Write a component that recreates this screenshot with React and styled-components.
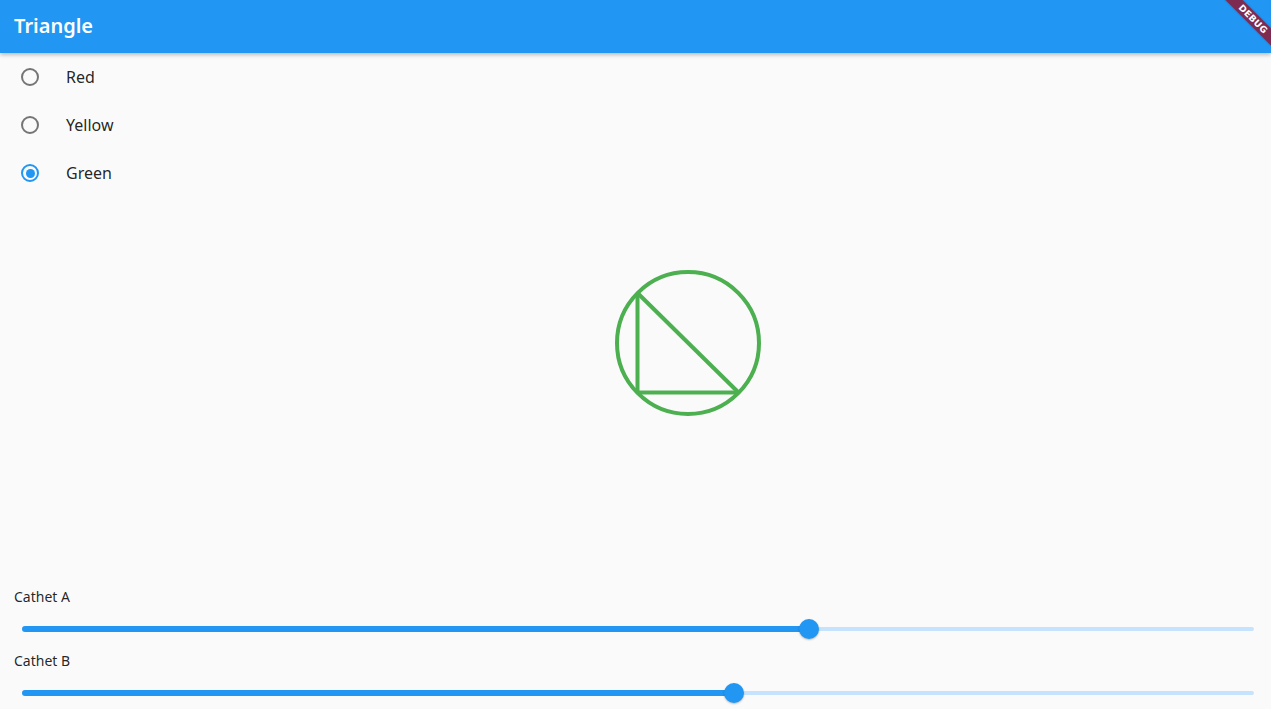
import React, { useState } from 'react';
import styled, { createGlobalStyle } from 'styled-components';

const Color = {
  primary: '#2196F3',
  track: '#c5e3fc',
  text: 'rgba(0, 0, 0, 0.87)',
  radio: '#757575',
  bg: '#fafafa',
  shape: '#4CAF50',
};

const GlobalStyle = createGlobalStyle`
  html, body, #root {
    margin: 0;
    height: 100%;
  }
  body {
    background: ${Color.bg};
    font-family: "Noto Sans", "Open Sans", sans-serif;
    overflow: hidden;
  }
`;

const colors = ['Red', 'Yellow', 'Green'];

export default function App() {
  const [selected, setSelected] = useState('Green');
  const [catA, setCatA] = useState(0.639);
  const [catB, setCatB] = useState(0.578);

  return (
    <>
      <GlobalStyle />
      <Page>
        <AppBar>
          <Title>Triangle</Title>
          <Banner>DEBUG</Banner>
        </AppBar>
        <RadioList>
          {colors.map((c) => (
            <RadioRow key={c} onClick={() => setSelected(c)}>
              <RadioCircle $checked={selected === c} />
              <RadioLabel>{c}</RadioLabel>
            </RadioRow>
          ))}
        </RadioList>
        <Canvas>
          <svg width="1271" height="384" viewBox="0 0 1271 384">
            <g fill="none" stroke={Color.shape} strokeWidth="4" strokeLinecap="butt">
              <circle cx="688" cy="146" r="71" />
              <line x1="637.5" y1="96" x2="637.5" y2="195.5" />
              <line x1="637.5" y1="195.5" x2="738.5" y2="195.5" />
              <line x1="637.5" y1="96" x2="738.5" y2="195.5" />
            </g>
          </svg>
        </Canvas>
        <Sliders>
          <SliderLabel>Cathet A</SliderLabel>
          <Slider value={catA} onChange={setCatA} />
          <SliderLabel>Cathet B</SliderLabel>
          <Slider value={catB} onChange={setCatB} />
        </Sliders>
      </Page>
    </>
  );
}

const Slider = ({ value, onChange }) => {
  const handleClick = (e) => {
    const rect = e.currentTarget.getBoundingClientRect();
    const v = (e.clientX - rect.left) / rect.width;
    onChange(Math.min(1, Math.max(0, v)));
  };
  return (
    <SliderRow>
      <Track onClick={handleClick}>
        <ActiveTrack style={{ width: `${value * 100}%` }} />
        <InactiveTrack />
        <Thumb style={{ left: `${value * 100}%` }} />
      </Track>
    </SliderRow>
  );
};

const Page = styled.div`
  height: 100%;
  display: flex;
  flex-direction: column;
`;

const AppBar = styled.header`
  position: relative;
  height: 53px;
  flex-shrink: 0;
  background: ${Color.primary};
  box-shadow: 0 2px 4px rgba(0, 0, 0, 0.25);
  display: flex;
  align-items: center;
  padding: 0 14px;
  overflow: hidden;
  z-index: 1;
`;

const Title = styled.h1`
  margin: 0 0 3px;
  color: #fff;
  font-size: 20px;
  font-weight: 600;
`;

const Banner = styled.div`
  position: absolute;
  width: 100px;
  height: 12px;
  left: 1203px;
  top: 13px;
  transform: rotate(45deg);
  background: #7e2b52;
  color: #fff;
  font-family: "DejaVu Sans", sans-serif;
  font-size: 9px;
  font-weight: 900;
  line-height: 12px;
  text-align: center;
  letter-spacing: 0.3px;
  box-shadow: 0 0 2px rgba(0, 0, 0, 0.3);
`;

const RadioList = styled.div`
  display: flex;
  flex-direction: column;
`;

const RadioRow = styled.div`
  height: 48px;
  display: flex;
  align-items: center;
  padding-left: 21px;
  cursor: pointer;
`;

const RadioCircle = styled.span`
  box-sizing: border-box;
  width: 18px;
  height: 18px;
  border-radius: 50%;
  border: 2px solid ${(p) => (p.$checked ? Color.primary : Color.radio)};
  display: flex;
  align-items: center;
  justify-content: center;
  &::after {
    content: '';
    display: ${(p) => (p.$checked ? 'block' : 'none')};
    width: 9px;
    height: 9px;
    border-radius: 50%;
    background: ${Color.primary};
  }
`;

const RadioLabel = styled.span`
  margin-left: 27px;
  font-size: 16px;
  color: ${Color.text};
`;

const Canvas = styled.div`
  flex: 1;
  display: flex;
  overflow: hidden;
`;

const Sliders = styled.div`
  display: flex;
  flex-direction: column;
`;

const SliderLabel = styled.div`
  box-sizing: border-box;
  height: 32px;
  display: flex;
  align-items: center;
  padding: 0 0 2px 14px;
  font-size: 14px;
  color: ${Color.text};
`;

const SliderRow = styled.div`
  height: 32px;
  display: flex;
  align-items: center;
  padding: 0 17px 0 22px;
`;

const Track = styled.div`
  position: relative;
  flex: 1;
  height: 20px;
  display: flex;
  align-items: center;
  cursor: pointer;
`;

const ActiveTrack = styled.div`
  height: 6px;
  background: ${Color.primary};
  border-radius: 3px 0 0 3px;
`;

const InactiveTrack = styled.div`
  flex: 1;
  height: 4px;
  background: ${Color.track};
  border-radius: 0 2px 2px 0;
`;

const Thumb = styled.div`
  position: absolute;
  top: 0;
  width: 20px;
  height: 20px;
  margin-left: -10px;
  border-radius: 50%;
  background: ${Color.primary};
  box-shadow: 0 1px 2px rgba(0, 0, 0, 0.25);
`;
